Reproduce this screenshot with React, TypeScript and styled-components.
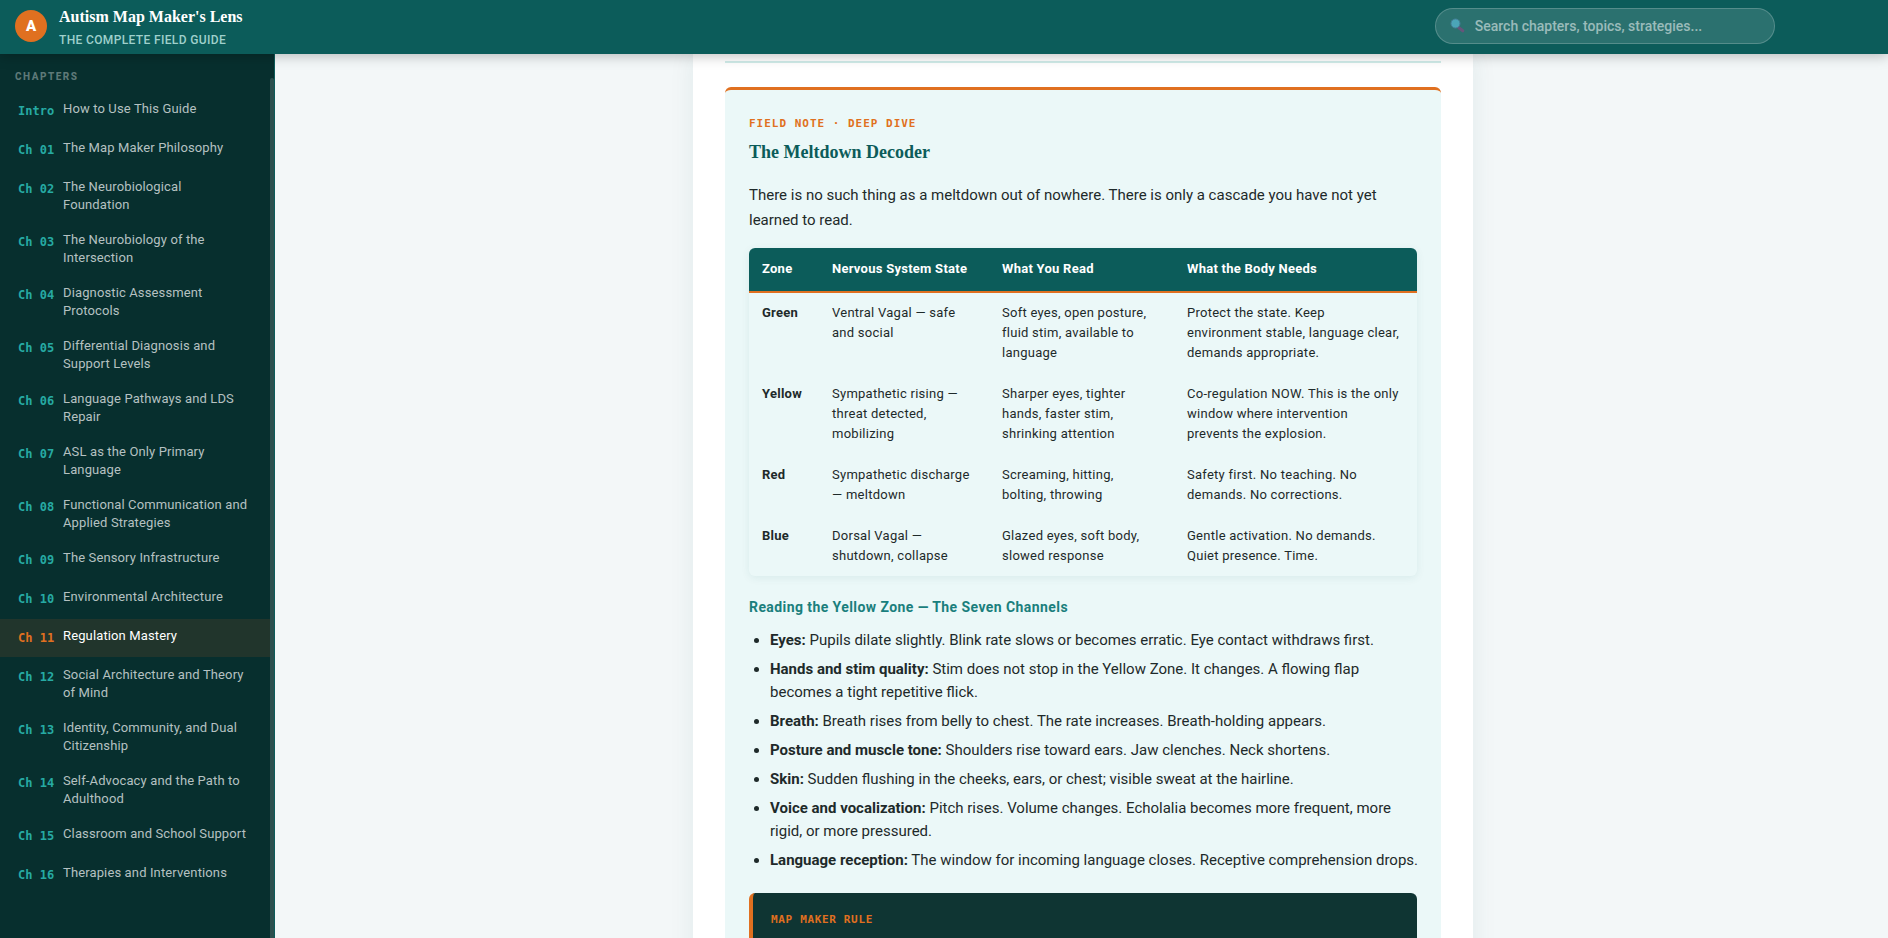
import React from "react";
import styled, { createGlobalStyle } from "styled-components";

const color = {
  teal: "#0c5c5a",
  tealDark: "#072f2e",
  tealMid: "#1a7f7d",
  aqua: "#26aaa3",
  orange: "#e07020",
  mint: "#ebf8f8",
  line: "#d0ece9",
  ink: "#1e2a2a",
};
const sans = `Roboto, "Liberation Sans", sans-serif`;
const serif = `"Liberation Serif", serif`;
const mono = `"DejaVu Sans Mono", "Liberation Mono", monospace`;

const GlobalStyle = createGlobalStyle`
  *, *::before, *::after { box-sizing: border-box; }
  body { margin: 0; background: #f3f7f8; color: ${color.ink}; font-family: ${sans}; font-size: 15px; }
`;

const Page = styled.div`
  display: flex;
  flex-direction: column;
  height: 100vh;
  overflow: hidden;
`;

const TopBar = styled.header`
  position: relative;
  z-index: 2;
  display: flex;
  flex: none;
  align-items: center;
  justify-content: space-between;
  height: 54px;
  padding: 0 6% 0 15px;
  background: ${color.teal};
  box-shadow: 0 2px 12px rgba(0, 0, 0, 0.25);
`;

const Brand = styled.a`
  display: flex;
  align-items: center;
  gap: 12px;
  color: #fff;
  text-decoration: none;
`;

const BrandMark = styled.span`
  display: grid;
  place-items: center;
  width: 32px;
  height: 32px;
  margin-bottom: 2px;
  border-radius: 50%;
  background: ${color.orange};
  font-size: 15px;
  font-weight: 900;
`;

const BrandText = styled.span`
  display: flex;
  flex-direction: column;
  gap: 4px;
  padding-top: 2px;
`;

const BrandName = styled.span`
  font: 700 16px/20px ${serif};
`;

const BrandTag = styled.span`
  color: #9fd0cc;
  font-size: 12px;
  font-weight: 500;
  line-height: 18px;
  letter-spacing: 0.03em;
  text-transform: uppercase;
`;

const Search = styled.label`
  display: flex;
  align-items: center;
  gap: 10px;
  width: 340px;
  height: 36px;
  margin-bottom: 2px;
  padding: 0 14px;
  border: 1px solid rgba(255, 255, 255, 0.2);
  border-radius: 18px;
  background: rgba(255, 255, 255, 0.13);
`;

const SearchInput = styled.input`
  flex: 1;
  min-width: 0;
  padding: 0;
  border: 0;
  outline: 0;
  background: transparent;
  color: #fff;
  font: 500 14px/20px ${sans};

  &::placeholder {
    color: rgba(255, 255, 255, 0.53);
    opacity: 1;
  }
`;

const Body = styled.div`
  display: flex;
  flex: 1;
  min-height: 0;
`;

const Sidebar = styled.nav`
  display: flex;
  flex: none;
  width: 275px;
  border-right: 1px solid ${color.teal};
  background: ${color.tealDark};
`;

const Chapters = styled.div`
  flex: 1;
  padding-top: 15px;
  overflow: hidden;
`;

const ChaptersTitle = styled.h2`
  margin: 0 0 7px;
  padding-left: 15px;
  color: #5e7978;
  font-size: 10px;
  font-weight: 800;
  line-height: 16px;
  letter-spacing: 0.15em;
  text-transform: uppercase;
`;

const ScrollRail = styled.div`
  width: 4px;
  padding-top: 24px;
`;

const ScrollThumb = styled.div`
  height: 100%;
  border-radius: 2px 2px 0 0;
  background: #2c504f;
`;

const ChapterList = styled.ul`
  margin: 0;
  padding: 0;
  list-style: none;
`;

const ChapterLink = styled.a<{ $active?: boolean }>`
  display: flex;
  align-items: flex-start;
  gap: 8px;
  min-height: 38px;
  margin-bottom: 1px;
  padding: 8px 20px 8px 18px;
  background: ${(p) => (p.$active ? "#21352c" : "transparent")};
  color: ${(p) => (p.$active ? "#fff" : "#b5c1c1")};
  font-size: 13px;
  line-height: 18px;
  letter-spacing: 0.01em;
  text-decoration: none;
`;

const ChapterNumber = styled.span<{ $active?: boolean }>`
  flex: none;
  width: 37px;
  padding-top: 2px;
  color: ${(p) => (p.$active ? color.orange : color.aqua)};
  font: 700 12px/18px ${mono};
  letter-spacing: 0;
`;

const Main = styled.main`
  flex: 1;
  min-width: 0;
  padding-left: 3px;
  overflow: hidden;
`;

const Paper = styled.article`
  max-width: 780px;
  min-height: 100%;
  margin: 0 auto;
  padding: 7px 32px 0;
  background: #fff;
  box-shadow: 0 0 24px rgba(12, 92, 90, 0.08);
`;

const Rule = styled.hr`
  height: 2px;
  margin: 0 0 24px;
  border: 0;
  background: ${color.line};
`;

const FieldNote = styled.section`
  padding: 25px 24px 40px;
  border-top: 3px solid ${color.orange};
  border-radius: 6px;
  background: ${color.mint};
`;

const Eyebrow = styled.div<{ $wide?: boolean }>`
  color: ${color.orange};
  font: 700 11px/18px ${mono};
  letter-spacing: ${(p) => (p.$wide ? "0.09em" : "0.06em")};
  text-transform: uppercase;
`;

const NoteTitle = styled.h3`
  margin: 7px 0 19px;
  color: ${color.teal};
  font: 700 18px/24px ${serif};
`;

const Lead = styled.p`
  margin: 0 0 15px;
  line-height: 25px;
`;

const ZoneTable = styled.table`
  width: 100%;
  table-layout: fixed;
  border-collapse: separate;
  border-spacing: 0;
  border-radius: 6px;
  overflow: hidden;
  box-shadow: 0 2px 8px rgba(12, 92, 90, 0.08);
  font-size: 13px;
  line-height: 20px;
  text-align: left;

  tbody tr:last-child > * {
    border-bottom: 0;
  }
`;

const HeadCell = styled.th<{ $width: string }>`
  width: ${(p) => p.$width};
  height: 45px;
  padding: 0 13px 2px;
  border-bottom: 2px solid ${color.orange};
  background: ${color.teal};
  color: #fff;
  font-weight: 700;
  letter-spacing: 0.02em;
`;

const rowCell = `
  padding: 10px 13px;
  border-bottom: 1px solid ${color.mint};
  vertical-align: top;
  letter-spacing: 0.02em;
`;

const ZoneName = styled.th`
  ${rowCell}
  font-weight: 700;
`;

const Cell = styled.td`
  ${rowCell}
  white-space: pre-line;
`;

const SubTitle = styled.h4`
  margin: 20px 0 11px;
  color: ${color.tealMid};
  font-size: 14px;
  font-weight: 700;
  line-height: 22px;
  letter-spacing: 0.03em;
`;

const ChannelList = styled.ul`
  margin: 0 -2px 21px 0;
  padding-left: 21px;
  line-height: 23px;
`;

const Channel = styled.li`
  margin-bottom: 6px;
`;

const RuleBox = styled.aside`
  min-height: 120px;
  padding: 18px;
  border-left: 4px solid ${color.orange};
  border-radius: 6px;
  background: #0f3533;
`;

const chapters: [string, string][] = [
  ["Intro", "How to Use This Guide"],
  ["Ch 01", "The Map Maker Philosophy"],
  ["Ch 02", "The Neurobiological Foundation"],
  ["Ch 03", "The Neurobiology of the Intersection"],
  ["Ch 04", "Diagnostic Assessment Protocols"],
  ["Ch 05", "Differential Diagnosis and Support Levels"],
  ["Ch 06", "Language Pathways and LDS Repair"],
  ["Ch 07", "ASL as the Only Primary Language"],
  ["Ch 08", "Functional Communication and Applied Strategies"],
  ["Ch 09", "The Sensory Infrastructure"],
  ["Ch 10", "Environmental Architecture"],
  ["Ch 11", "Regulation Mastery"],
  ["Ch 12", "Social Architecture and Theory of Mind"],
  ["Ch 13", "Identity, Community, and Dual Citizenship"],
  ["Ch 14", "Self-Advocacy and the Path to Adulthood"],
  ["Ch 15", "Classroom and School Support"],
  ["Ch 16", "Therapies and Interventions"],
];
const activeChapter = "Ch 11";

const columns: [string, string][] = [
  ["Zone", "70px"],
  ["Nervous System State", "170px"],
  ["What You Read", "185px"],
  ["What the Body Needs", "auto"],
];

const zones = [
  ["Green", "Ventral Vagal — safe\nand social", "Soft eyes, open posture,\nfluid stim, available to\nlanguage", "Protect the state. Keep\nenvironment stable, language clear,\ndemands appropriate."],
  ["Yellow", "Sympathetic rising —\nthreat detected,\nmobilizing", "Sharper eyes, tighter\nhands, faster stim,\nshrinking attention", "Co-regulation NOW. This is the only\nwindow where intervention\nprevents the explosion."],
  ["Red", "Sympathetic discharge\n— meltdown", "Screaming, hitting,\nbolting, throwing", "Safety first. No teaching. No\ndemands. No corrections."],
  ["Blue", "Dorsal Vagal —\nshutdown, collapse", "Glazed eyes, soft body,\nslowed response", "Gentle activation. No demands.\nQuiet presence. Time."],
];

const channels: [string, string][] = [
  ["Eyes:", "Pupils dilate slightly. Blink rate slows or becomes erratic. Eye contact withdraws first."],
  ["Hands and stim quality:", "Stim does not stop in the Yellow Zone. It changes. A flowing flap becomes a tight repetitive flick."],
  ["Breath:", "Breath rises from belly to chest. The rate increases. Breath-holding appears."],
  ["Posture and muscle tone:", "Shoulders rise toward ears. Jaw clenches. Neck shortens."],
  ["Skin:", "Sudden flushing in the cheeks, ears, or chest; visible sweat at the hairline."],
  ["Voice and vocalization:", "Pitch rises. Volume changes. Echolalia becomes more frequent, more rigid, or more pressured."],
  ["Language reception:", "The window for incoming language closes. Receptive comprehension drops."],
];

function MagnifierIcon() {
  return (
    <svg width="15" height="16" viewBox="0 0 15 16" aria-hidden="true">
      <path d="M8.5 9.5 12.8 12.8" stroke="#66557b" strokeWidth="3" strokeLinecap="round" />
      <circle cx="5.5" cy="5.5" r="4.5" fill="#4ba5b8" stroke="#457f98" strokeWidth="1" />
    </svg>
  );
}

export default function App() {
  return (
    <Page>
      <GlobalStyle />
      <TopBar>
        <Brand href="#top">
          <BrandMark>A</BrandMark>
          <BrandText>
            <BrandName>Autism Map Maker's Lens</BrandName>
            <BrandTag>The Complete Field Guide</BrandTag>
          </BrandText>
        </Brand>
        <Search>
          <MagnifierIcon />
          <SearchInput type="text" aria-label="Search" placeholder="Search chapters, topics, strategies..." />
        </Search>
      </TopBar>
      <Body>
        <Sidebar aria-label="Chapters">
          <Chapters>
            <ChaptersTitle>Chapters</ChaptersTitle>
            <ChapterList>
              {chapters.map(([number, title]) => (
                <li key={number}>
                  <ChapterLink href={`#${number.replace(" ", "-")}`} $active={number === activeChapter}>
                    <ChapterNumber $active={number === activeChapter}>{number}</ChapterNumber>
                    <span>{title}</span>
                  </ChapterLink>
                </li>
              ))}
            </ChapterList>
          </Chapters>
          <ScrollRail>
            <ScrollThumb />
          </ScrollRail>
        </Sidebar>
        <Main>
          <Paper>
            <Rule />
            <FieldNote>
              <Eyebrow $wide>Field Note · Deep Dive</Eyebrow>
              <NoteTitle>The Meltdown Decoder</NoteTitle>
              <Lead>
                There is no such thing as a meltdown out of nowhere. There is only a cascade you have not yet
                learned to read.
              </Lead>
              <ZoneTable>
                <thead>
                  <tr>
                    {columns.map(([label, width]) => (
                      <HeadCell key={label} scope="col" $width={width}>
                        {label}
                      </HeadCell>
                    ))}
                  </tr>
                </thead>
                <tbody>
                  {zones.map(([zone, ...cells]) => (
                    <tr key={zone}>
                      <ZoneName scope="row">{zone}</ZoneName>
                      {cells.map((text) => (
                        <Cell key={text}>{text}</Cell>
                      ))}
                    </tr>
                  ))}
                </tbody>
              </ZoneTable>
              <SubTitle>Reading the Yellow Zone — The Seven Channels</SubTitle>
              <ChannelList>
                {channels.map(([name, text]) => (
                  <Channel key={name}>
                    <strong>{name}</strong> {text}
                  </Channel>
                ))}
              </ChannelList>
              <RuleBox>
                <Eyebrow>Map Maker Rule</Eyebrow>
              </RuleBox>
            </FieldNote>
          </Paper>
        </Main>
      </Body>
    </Page>
  );
}
